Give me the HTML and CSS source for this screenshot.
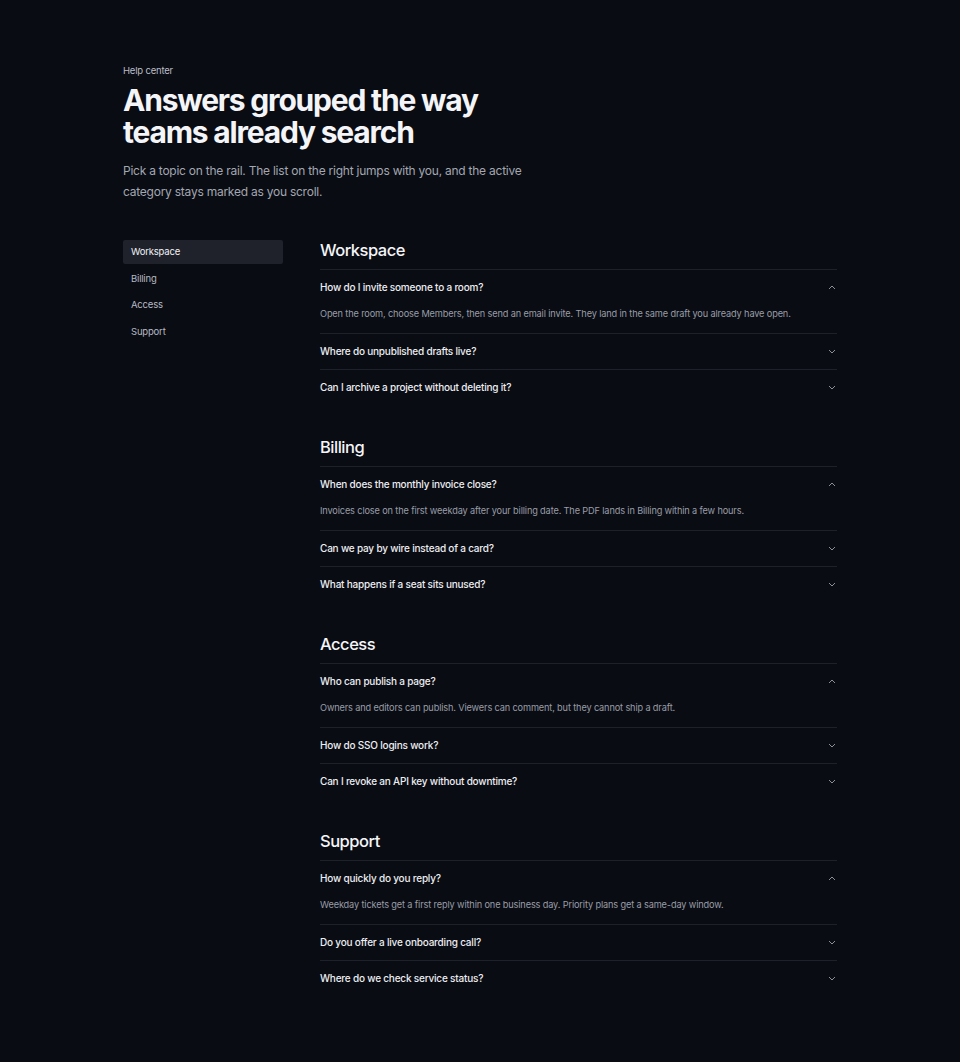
FILE: index.html
```html
<!DOCTYPE html>
<html lang="en">
<head>
    <meta charset="UTF-8">
    <meta name="viewport" content="width=device-width, initial-scale=1.0">
    <title>Help center</title>
    <link rel="stylesheet" href="styles.css">
</head>
<body>
    <div class="page">
        <header class="hero">
            <p class="eyebrow">Help center</p>
            <h1 class="title">Answers grouped the way teams already search</h1>
            <p class="lead">Pick a topic on the rail. The list on the right jumps with you, and the active category stays marked as you scroll.</p>
        </header>

        <div class="layout">
            <nav class="rail">
                <a class="rail-item active" href="#workspace">Workspace</a>
                <a class="rail-item" href="#billing">Billing</a>
                <a class="rail-item" href="#access">Access</a>
                <a class="rail-item" href="#support">Support</a>
            </nav>

            <main class="topics">
                <section class="topic" id="workspace">
                    <h2 class="topic-title">Workspace</h2>
                    <div class="faq open">
                        <div class="question">How do I invite someone to a room?<svg class="chev" viewBox="0 0 8 5"><path d="M1 4L4 1L7 4"/></svg></div>
                        <p class="answer">Open the room, choose Members, then send an email invite. They land in the same draft you already have open.</p>
                    </div>
                    <div class="faq">
                        <div class="question">Where do unpublished drafts live?<svg class="chev" viewBox="0 0 8 5"><path d="M1 1L4 4L7 1"/></svg></div>
                    </div>
                    <div class="faq">
                        <div class="question">Can I archive a project without deleting it?<svg class="chev" viewBox="0 0 8 5"><path d="M1 1L4 4L7 1"/></svg></div>
                    </div>
                </section>

                <section class="topic" id="billing">
                    <h2 class="topic-title">Billing</h2>
                    <div class="faq open">
                        <div class="question">When does the monthly invoice close?<svg class="chev" viewBox="0 0 8 5"><path d="M1 4L4 1L7 4"/></svg></div>
                        <p class="answer">Invoices close on the first weekday after your billing date. The PDF lands in Billing within a few hours.</p>
                    </div>
                    <div class="faq">
                        <div class="question">Can we pay by wire instead of a card?<svg class="chev" viewBox="0 0 8 5"><path d="M1 1L4 4L7 1"/></svg></div>
                    </div>
                    <div class="faq">
                        <div class="question">What happens if a seat sits unused?<svg class="chev" viewBox="0 0 8 5"><path d="M1 1L4 4L7 1"/></svg></div>
                    </div>
                </section>

                <section class="topic" id="access">
                    <h2 class="topic-title">Access</h2>
                    <div class="faq open">
                        <div class="question">Who can publish a page?<svg class="chev" viewBox="0 0 8 5"><path d="M1 4L4 1L7 4"/></svg></div>
                        <p class="answer">Owners and editors can publish. Viewers can comment, but they cannot ship a draft.</p>
                    </div>
                    <div class="faq">
                        <div class="question">How do SSO logins work?<svg class="chev" viewBox="0 0 8 5"><path d="M1 1L4 4L7 1"/></svg></div>
                    </div>
                    <div class="faq">
                        <div class="question">Can I revoke an API key without downtime?<svg class="chev" viewBox="0 0 8 5"><path d="M1 1L4 4L7 1"/></svg></div>
                    </div>
                </section>

                <section class="topic" id="support">
                    <h2 class="topic-title">Support</h2>
                    <div class="faq open">
                        <div class="question">How quickly do you reply?<svg class="chev" viewBox="0 0 8 5"><path d="M1 4L4 1L7 4"/></svg></div>
                        <p class="answer">Weekday tickets get a first reply within one business day. Priority plans get a same-day window.</p>
                    </div>
                    <div class="faq">
                        <div class="question">Do you offer a live onboarding call?<svg class="chev" viewBox="0 0 8 5"><path d="M1 1L4 4L7 1"/></svg></div>
                    </div>
                    <div class="faq">
                        <div class="question">Where do we check service status?<svg class="chev" viewBox="0 0 8 5"><path d="M1 1L4 4L7 1"/></svg></div>
                    </div>
                </section>
            </main>
        </div>
    </div>
</body>
</html>
```

FILE: styles.css
```css
*{
    margin: 0;
    padding: 0;
    box-sizing: border-box;
}
body{
    background-color: #0a0c13;
    color: #eef0f4;
    font-family: Inter, "Noto Sans", sans-serif;
}
.page{
    width: 714px;
    margin: 0 auto;
    padding-top: 64px;
    padding-bottom: 60px;
}
.eyebrow{
    font-size: 9.5px;
    letter-spacing: -0.02em;
    color: #b9bdc6;
    line-height: 14px;
}
.title{
    margin-top: 6px;
    width: 420px;
    font-size: 30px;
    font-weight: 700;
    line-height: 32px;
    letter-spacing: -0.04em;
    color: #f4f5f8;
}
.lead{
    margin-top: 12px;
    width: 420px;
    font-size: 12px;
    line-height: 21px;
    letter-spacing: -0.02em;
    color: #a2a7b1;
}
.layout{
    display: flex;
    gap: 37px;
    margin-top: 38px;
}
.rail{
    width: 160px;
    flex-shrink: 0;
    display: flex;
    flex-direction: column;
    gap: 2.7px;
}
.rail-item{
    display: block;
    height: 24px;
    line-height: 24px;
    padding: 0 8px;
    font-size: 9.5px;
    letter-spacing: -0.02em;
    color: #b6bac3;
    text-decoration: none;
    border-radius: 2px;
}
.rail-item.active{
    background-color: #1f222b;
    color: #f1f3f6;
}
.topics{
    flex: 1;
}
.topic{
    margin-bottom: 32px;
}
.topic-title{
    font-size: 16.5px;
    font-weight: 500;
    line-height: 21px;
    padding-bottom: 8px;
    letter-spacing: -0.03em;
    color: #f4f5f8;
    border-bottom: 1px solid #1e212a;
}
.faq{
    border-bottom: 1px solid #1e212a;
}
.faq:last-child{
    border-bottom: none;
}
.question{
    display: flex;
    justify-content: space-between;
    align-items: center;
    height: 35px;
    padding-bottom: 1px;
    font-size: 10px;
    font-weight: 500;
    letter-spacing: -0.02em;
    color: #eceef2;
}
.chev{
    width: 8px;
    height: 5px;
    margin-right: 1px;
    fill: none;
    stroke: #8a8f99;
    stroke-width: 1;
}
.answer{
    font-size: 9.2px;
    line-height: 12px;
    letter-spacing: -0.015em;
    color: #989da7;
    padding-bottom: 13px;
    margin-top: 3px;
}
```
